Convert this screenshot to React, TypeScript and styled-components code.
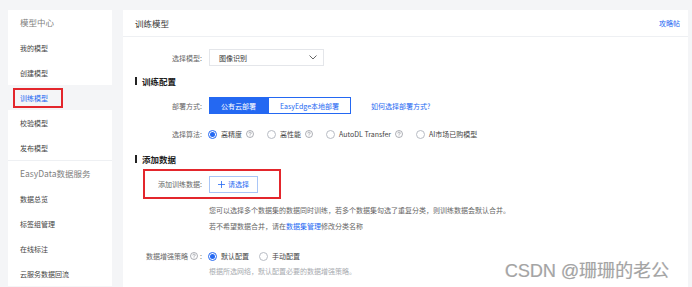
import React from "react";
import styled, { createGlobalStyle } from "styled-components";

const BLUE = "#2468f2";
const RED = "#e3262c";

const GlobalStyle = createGlobalStyle`
  html, body {
    margin: 0;
    padding: 0;
    background: #f4f5f7;
    overflow: hidden;
  }
  body {
    font-family: "Noto Sans CJK SC", "Liberation Sans", sans-serif;
    color: #333;
  }
`;

const Page = styled.div`
  position: relative;
  display: flex;
  gap: 11px;
  height: 287px;
  box-sizing: border-box;
  padding: 10px 4px 0 8px;
`;

/* ---------- sidebar ---------- */

const Sidebar = styled.nav`
  width: 104px;
  flex-shrink: 0;
  background: #fff;
  display: flex;
  flex-direction: column;
  align-self: flex-start;
`;

const NavGroup = styled.div<{ $divider?: boolean }>`
  display: flex;
  flex-direction: column;
  border-top: ${(p) => (p.$divider ? "1px solid #eef0f3" : "none")};
`;

const NavTitle = styled.div`
  height: 25px;
  line-height: 25px;
  padding-left: 12px;
  font-size: 8.5px;
  color: #808080;
`;

const NavItem = styled.div<{ $active?: boolean }>`
  height: 25px;
  display: flex;
  align-items: center;
  padding-left: 12px;
  font-size: 7px;
  color: ${(p) => (p.$active ? BLUE : "#444")};
  background: ${(p) => (p.$active ? "#f4f5f7" : "#fff")};
`;

const MarkedLabel = styled.span`
  display: flex;
  align-items: center;
  box-sizing: border-box;
  width: 50px;
  height: 20px;
  margin-left: -7px;
  padding-left: 5px;
  border: 2px solid ${RED};
`;

/* ---------- main panel ---------- */

const Main = styled.main`
  flex: 1;
  background: #fff;
  display: flex;
  flex-direction: column;
`;

const Header = styled.header`
  height: 26px;
  flex-shrink: 0;
  display: flex;
  align-items: center;
  justify-content: space-between;
  padding: 0 8px 0 12px;
  border-bottom: 1px solid #eef0f3;
`;

const HeaderTitle = styled.span`
  font-size: 8.5px;
  color: #333;
`;

const Link = styled.a<{ $gap?: number }>`
  font-size: 7px;
  color: ${BLUE};
  text-decoration: none;
  margin-left: ${(p) => p.$gap ?? 0}px;
`;

const Row = styled.div<{ $top: number; $height: number }>`
  display: flex;
  align-items: center;
  margin-top: ${(p) => p.$top}px;
  height: ${(p) => p.$height}px;
  flex-shrink: 0;
`;

const FieldLabel = styled.span<{ $width?: number }>`
  width: ${(p) => p.$width ?? 79}px;
  margin-right: 7px;
  text-align: right;
  font-size: 7px;
  color: #666;
  display: flex;
  align-items: center;
  justify-content: flex-end;
  gap: 2px;
  flex-shrink: 0;
`;

const Select = styled.div`
  width: 115px;
  height: 17px;
  box-sizing: border-box;
  border: 1px solid #e4e6ea;
  display: flex;
  align-items: center;
  justify-content: space-between;
  padding: 0 6px 0 9px;
  font-size: 7px;
  color: #333;
`;

const SectionTitle = styled.div<{ $top: number }>`
  margin-top: ${(p) => p.$top}px;
  height: 14px;
  display: flex;
  align-items: center;
  gap: 5px;
  padding-left: 12px;
  font-size: 8.5px;
  font-weight: 700;
  color: #1e1e1e;
  flex-shrink: 0;

  &::before {
    content: "";
    width: 2px;
    height: 8px;
    background: #222;
  }
`;

const Segment = styled.div`
  display: flex;
`;

const SegmentButton = styled.button<{ $active?: boolean; $width: number }>`
  width: ${(p) => p.$width}px;
  height: 17px;
  padding: 0;
  font-family: inherit;
  font-size: 7px;
  border: 1px solid ${BLUE};
  background: ${(p) => (p.$active ? BLUE : "#fff")};
  color: ${(p) => (p.$active ? "#fff" : BLUE)};
  cursor: pointer;
`;

const RadioGroup = styled.div<{ $gap: number }>`
  display: flex;
  align-items: center;
  gap: ${(p) => p.$gap}px;
  margin-left: -1px;
`;

const RadioOption = styled.label`
  display: flex;
  align-items: center;
  gap: 4px;
  font-size: 7px;
  color: #444;
`;

const RadioMark = styled.span<{ $checked?: boolean }>`
  width: 9px;
  height: 9px;
  box-sizing: border-box;
  border-radius: 50%;
  border: 1px solid ${(p) => (p.$checked ? BLUE : "#b8bcc4")};
  display: flex;
  align-items: center;
  justify-content: center;

  &::after {
    content: "";
    width: 5px;
    height: 5px;
    border-radius: 50%;
    background: ${(p) => (p.$checked ? BLUE : "transparent")};
  }
`;

const Highlight = styled.div`
  margin: 3px 0 0 20px;
  width: 138px;
  height: 30px;
  box-sizing: border-box;
  border: 2px solid ${RED};
  display: flex;
  align-items: center;
  flex-shrink: 0;
`;

const PickButton = styled.button`
  width: 49px;
  height: 17px;
  padding: 0;
  display: flex;
  align-items: center;
  justify-content: center;
  gap: 3px;
  background: #fff;
  border: 1px solid #a9c6f7;
  color: ${BLUE};
  font-family: inherit;
  font-size: 7px;
  cursor: pointer;
`;

const Note = styled.p<{ $top: number; $muted?: boolean }>`
  margin: ${(p) => p.$top}px 0 0 86px;
  height: 14px;
  line-height: 14px;
  font-size: 7px;
  color: ${(p) => (p.$muted ? "#a8abb0" : "#666")};
  white-space: nowrap;
  flex-shrink: 0;
`;

const Watermark = styled.div`
  position: absolute;
  left: 505px;
  top: 256px;
  font-family: "Liberation Sans", "Noto Sans CJK SC", sans-serif;
  font-size: 18px;
  color: #a4a4a4;
  text-shadow: 1px 1px 0 #fff, -0.5px -0.5px 0 #d6d6d6;
  white-space: nowrap;
  pointer-events: none;
`;

const HelpIcon = () => (
  <svg width="8" height="8" viewBox="0 0 8 8" style={{ flexShrink: 0 }}>
    <circle cx="4" cy="4" r="3.5" fill="none" stroke="#8a8e96" strokeWidth="0.7" />
    <path
      d="M2.9 3.1a1.1 1.1 0 1 1 1.6 1c-.4.2-.5.4-.5.8"
      fill="none"
      stroke="#8a8e96"
      strokeWidth="0.7"
      strokeLinecap="round"
    />
    <circle cx="4" cy="5.9" r="0.4" fill="#8a8e96" />
  </svg>
);

const Chevron = () => (
  <svg width="8" height="5" viewBox="0 0 8 5">
    <polyline points="0.5,0.5 4,4 7.5,0.5" fill="none" stroke="#555" strokeWidth="0.9" />
  </svg>
);

const Plus = () => (
  <svg width="7" height="7" viewBox="0 0 7 7">
    <path d="M3.5 0v7M0 3.5h7" stroke={BLUE} strokeWidth="0.8" />
  </svg>
);

const modelNav = ["我的模型", "创建模型", "训练模型", "校验模型", "发布模型"];
const dataNav = ["数据总览", "标签组管理", "在线标注", "云服务数据回流"];

const algorithms = [
  { name: "高精度", help: true, checked: true },
  { name: "高性能", help: true },
  { name: "AutoDL Transfer", help: true },
  { name: "AI市场已购模型", help: false },
];

export default function App() {
  return (
    <>
      <GlobalStyle />
      <Page>
        <Sidebar>
          <NavGroup>
            <NavTitle>模型中心</NavTitle>
            {modelNav.map((item) =>
              item === "训练模型" ? (
                <NavItem key={item} $active>
                  <MarkedLabel>{item}</MarkedLabel>
                </NavItem>
              ) : (
                <NavItem key={item}>{item}</NavItem>
              )
            )}
          </NavGroup>
          <NavGroup $divider>
            <NavTitle>EasyData数据服务</NavTitle>
            {dataNav.map((item) => (
              <NavItem key={item}>{item}</NavItem>
            ))}
          </NavGroup>
        </Sidebar>

        <Main>
          <Header>
            <HeaderTitle>训练模型</HeaderTitle>
            <Link href="#">攻略帖</Link>
          </Header>

          <Row $top={12} $height={17}>
            <FieldLabel>选择模型:</FieldLabel>
            <Select>
              <span>图像识别</span>
              <Chevron />
            </Select>
          </Row>

          <SectionTitle $top={8}>训练配置</SectionTitle>

          <Row $top={9} $height={17}>
            <FieldLabel>部署方式:</FieldLabel>
            <Segment>
              <SegmentButton $active $width={59}>
                公有云部署
              </SegmentButton>
              <SegmentButton $width={83}>EasyEdge本地部署</SegmentButton>
            </Segment>
            <Link href="#" $gap={20}>
              如何选择部署方式?
            </Link>
          </Row>

          <Row $top={12} $height={16}>
            <FieldLabel>选择算法:</FieldLabel>
            <RadioGroup $gap={13}>
              {algorithms.map((a) => (
                <RadioOption key={a.name}>
                  <RadioMark $checked={a.checked} />
                  <span>{a.name}</span>
                  {a.help && <HelpIcon />}
                </RadioOption>
              ))}
            </RadioGroup>
          </Row>

          <SectionTitle $top={10}>添加数据</SectionTitle>

          <Highlight>
            <FieldLabel $width={57}>添加训练数据:</FieldLabel>
            <PickButton>
              <Plus />
              请选择
            </PickButton>
          </Highlight>

          <Note $top={4}>
            您可以选择多个数据集的数据同时训练，若多个数据集勾选了重复分类，则训练数据会默认合并。
          </Note>
          <Note $top={2}>
            若不希望数据合并，请在<Link href="#">数据集管理</Link>修改分类名称
          </Note>

          <Row $top={15} $height={16}>
            <FieldLabel>
              数据增强策略 <HelpIcon /> :
            </FieldLabel>
            <RadioGroup $gap={10}>
              <RadioOption>
                <RadioMark $checked />
                <span>默认配置</span>
              </RadioOption>
              <RadioOption>
                <RadioMark />
                <span>手动配置</span>
              </RadioOption>
            </RadioGroup>
          </Row>
          <Note $top={0} $muted>
            根据所选网络，默认配置必要的数据增强策略。
          </Note>
        </Main>

        <Watermark>CSDN @珊珊的老公</Watermark>
      </Page>
    </>
  );
}
